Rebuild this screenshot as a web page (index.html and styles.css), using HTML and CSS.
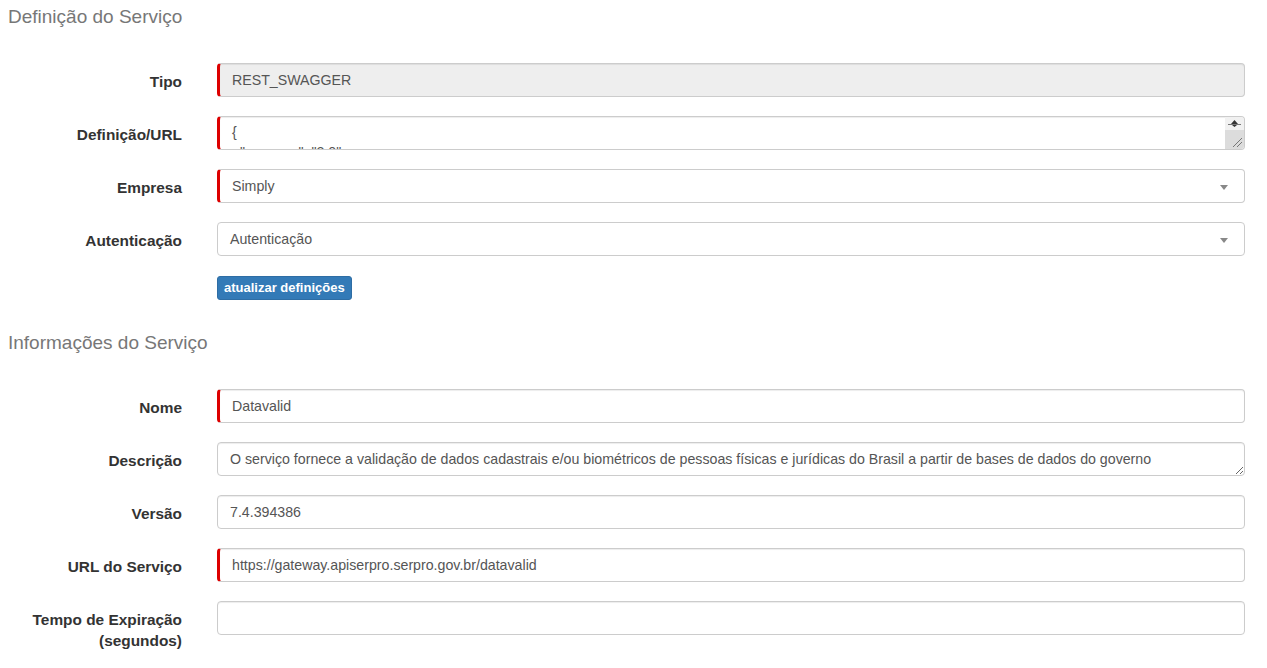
FILE: index.html
```html
<!DOCTYPE html>
<html lang="pt-BR">
<head>
    <meta charset="UTF-8">
    <title>Serviço - Definição</title>
    <link rel="stylesheet" href="styles.css">
</head>
<body>
    <div class="container">
        <h4 class="section-title">Definição do Serviço</h4>
        <div class="form-group">
            <label>Tipo</label>
            <input type="text" class="form-control required" value="REST_SWAGGER" disabled>
        </div>
        <div class="form-group">
            <label>Definição/URL</label>
            <div class="textarea-wrap">
                <textarea class="form-control required definition">{
  "swagger": "2.0",
  "info": {
    "description": "Datavalid",
    "version": "7.4.394386"
  }
}</textarea>
                <div class="fake-scroll">
                    <div class="scroll-up">
                        <svg width="15" height="11" viewBox="0 0 15 11">
                            <line x1="1" y1="6.5" x2="14" y2="6.5" stroke="#777" stroke-width="1"/>
                            <polygon points="7.5,2 11,6 4,6" fill="#333"/>
                            <polygon points="5,7 10,7 7.5,9" fill="#333"/>
                        </svg>
                    </div>
                    <div class="scroll-track">
                        <svg width="12" height="12" viewBox="0 0 12 12" class="grip">
                            <line x1="2" y1="11" x2="11" y2="2" stroke="#777" stroke-width="1"/>
                            <line x1="6" y1="11" x2="11" y2="6" stroke="#777" stroke-width="1"/>
                        </svg>
                    </div>
                </div>
            </div>
        </div>
        <div class="form-group">
            <label>Empresa</label>
            <div class="form-control select required">
                <span>Simply</span>
                <span class="arrow"></span>
            </div>
        </div>
        <div class="form-group">
            <label>Autenticação</label>
            <div class="form-control select">
                <span>Autenticação</span>
                <span class="arrow"></span>
            </div>
        </div>
        <div class="form-group actions">
            <label></label>
            <div><button type="button" class="btn">atualizar definições</button></div>
        </div>

        <h4 class="section-title second">Informações do Serviço</h4>
        <div class="form-group">
            <label>Nome</label>
            <input type="text" class="form-control required" value="Datavalid">
        </div>
        <div class="form-group">
            <label>Descrição</label>
            <textarea class="form-control" rows="1">O serviço fornece a validação de dados cadastrais e/ou biométricos de pessoas físicas e jurídicas do Brasil a partir de bases de dados do governo</textarea>
        </div>
        <div class="form-group">
            <label>Versão</label>
            <input type="text" class="form-control" value="7.4.394386">
        </div>
        <div class="form-group">
            <label>URL do Serviço</label>
            <input type="text" class="form-control required" value="https://gateway.apiserpro.serpro.gov.br/datavalid">
        </div>
        <div class="form-group">
            <label>Tempo de Expiração (segundos)</label>
            <input type="text" class="form-control" value="">
        </div>
    </div>
</body>
</html>
```

FILE: styles.css
```css
body {
    font-family: "Liberation Sans", Arial, sans-serif;
    font-size: 14px;
    color: #333;
    background-color: #fff;
    margin: 0;
    padding: 0;
}
.container {
    padding: 7px 22px 0 8px;
}
.section-title {
    font-size: 19px;
    font-weight: normal;
    line-height: 20px;
    color: #777;
    margin: 0 0 36px 0;
}
.section-title.second {
    margin-top: 33px;
}
.form-group {
    display: flex;
    align-items: flex-start;
    margin-bottom: 19px;
}
.form-group label {
    width: 174px;
    flex-shrink: 0;
    margin-right: 35px;
    text-align: right;
    font-size: 15.4px;
    font-weight: bold;
    line-height: 21px;
    padding-top: 8px;
}
.form-control {
    flex: 1;
    box-sizing: border-box;
    height: 34px;
    padding: 6px 12px;
    font-family: "Liberation Sans", Arial, sans-serif;
    font-size: 14.2px;
    line-height: 20px;
    color: #555;
    background-color: #fff;
    border: 1px solid #ccc;
    border-radius: 4px;
    box-shadow: inset 0 1px 1px rgba(0, 0, 0, 0.075);
    margin: 0;
}
.form-control.required {
    border-left: 3px solid #dd0000;
}
.form-control[disabled] {
    background-color: #eee;
}
textarea.form-control {
    resize: vertical;
    min-height: 34px;
    white-space: pre-wrap;
    overflow: hidden;
}
.textarea-wrap {
    flex: 1;
    display: flex;
    position: relative;
}
textarea.definition {
    resize: none;
    padding-top: 5px;
}
.fake-scroll {
    position: absolute;
    top: 1px;
    right: 1px;
    bottom: 1px;
    width: 19px;
    display: flex;
    flex-direction: column;
    border-radius: 0 3px 3px 0;
    overflow: hidden;
}
.scroll-up {
    height: 13px;
    background-color: #f1f1f1;
    display: flex;
    justify-content: center;
    align-items: center;
}
.scroll-track {
    flex: 1;
    background-color: #dcdcdc;
    position: relative;
}
.scroll-track .grip {
    position: absolute;
    right: 1px;
    bottom: 1px;
}
.select {
    position: relative;
    display: flex;
    align-items: center;
    padding-left: 12px;
    box-shadow: none;
}
.select .arrow {
    position: absolute;
    right: 16px;
    top: 15px;
    border-style: solid;
    border-width: 5px 4px 0 4px;
    border-color: #888 transparent transparent transparent;
}
.actions {
    margin-bottom: 0;
}
.actions label {
    padding-top: 0;
}
.btn {
    font-family: "Liberation Sans", Arial, sans-serif;
    font-size: 13px;
    font-weight: bold;
    line-height: 16px;
    color: #fff;
    background-color: #337ab7;
    border: 1px solid #2e6da4;
    border-radius: 3px;
    padding: 3px 6px;
    margin-top: 1px;
    cursor: pointer;
}
.btn:hover {
    background-color: #286090;
}
```
